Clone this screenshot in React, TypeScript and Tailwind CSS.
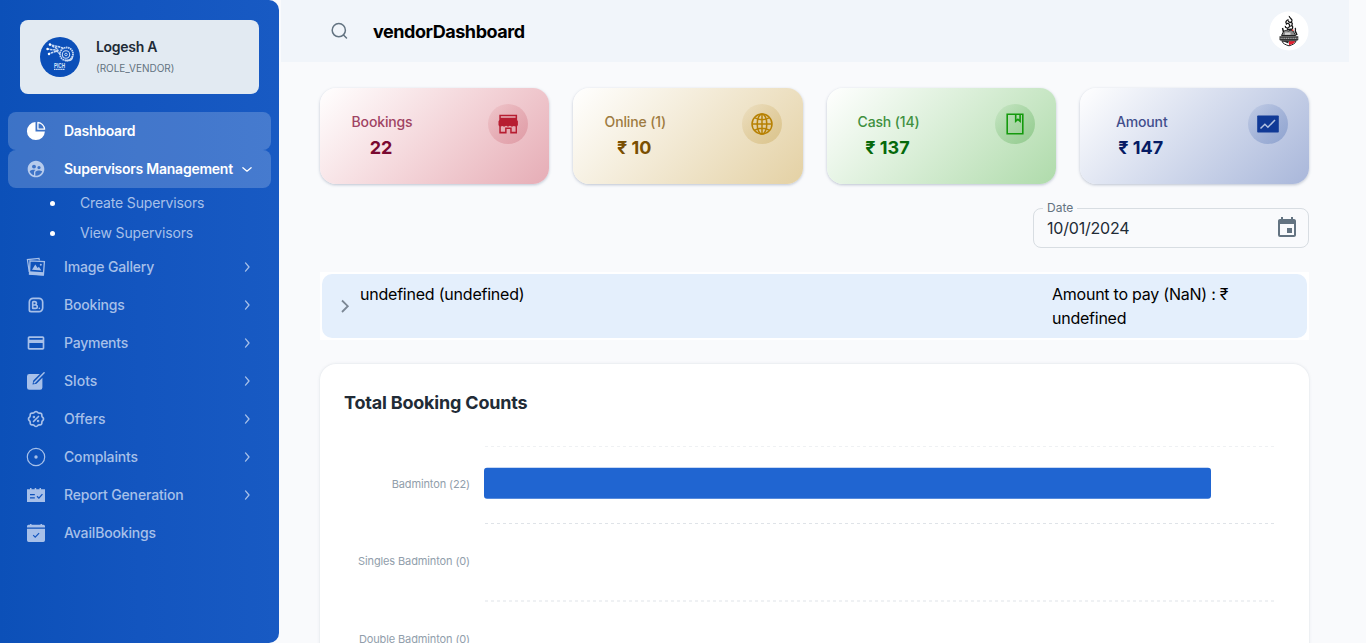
import type { ReactNode } from "react";
import { MdEvent, MdPayment, MdSupervisedUserCircle } from "react-icons/md";
import { TbBrandBooking, TbRosetteDiscount } from "react-icons/tb";

const PieIcon = () => (
  <svg width="20" height="20" viewBox="0 0 20 20" fill="none">
    <path fill="currentColor" d="M9.500 1.100v9.400h9.400A9 9 0 1 1 9.500 1.100Z" />
    <path stroke="currentColor" strokeWidth="1.300" strokeLinejoin="round" d="M11.900 1.500v6.700h6.700a7.300 7.300 0 0 0-6.700-6.700Z" />
  </svg>
);
const GalleryIcon = () => (
  <svg width="20" height="20" viewBox="0 0 20 20" fill="none" stroke="currentColor">
    <path strokeWidth="1.200" d="M3.200 15 1.400 2.600 13 1.300l.4 2" />
    <path strokeWidth="1.300" d="m4 3.800 14.400.9-1 13.400-13.900-1Z" />
    <path fill="currentColor" stroke="none" d="m3.300 14.300 14.400 1-.3 3.200-14-1ZM6 12.800l3.300-5.400 2.300 3.600 1.300-1.300 2.500 3.700Z" />
    <circle cx="14.800" cy="7.800" r="1" fill="currentColor" stroke="none" />
  </svg>
);
const EditIcon = () => (
  <svg width="20" height="20" viewBox="0 0 20 20" fill="none">
    <path fill="currentColor" d="M3.300 3h10.500L7.300 9.600l-.8 4 4-.8 5.900-6v9.700a2.300 2.300 0 0 1-2.300 2.300H3.300A2.300 2.300 0 0 1 1 16.500V5.300A2.300 2.300 0 0 1 3.300 3Z" />
    <path stroke="currentColor" strokeWidth="1.500" strokeLinecap="round" d="m8.300 11.700 9.800-9.900" />
  </svg>
);
const TargetIcon = () => (
  <svg width="20" height="20" viewBox="0 0 20 20" fill="none">
    <circle cx="10" cy="10" r="8.700" stroke="currentColor" strokeWidth="1.200" />
    <circle cx="10" cy="10" r="1.700" fill="currentColor" />
  </svg>
);
const ReportIcon = () => (
  <svg width="20" height="20" viewBox="0 0 20 20" fill="none">
    <path fill="currentColor" fillRule="evenodd" d="M1 4.200h3V3h1.500v1.200h3.200V3h1.500v1.200h3.300V3H15v1.200h4V17H1Zm3 4.900v1.200h4.800V9.100Zm0 3.200v1.200h4.800v-1.200Z" />
    <path d="m11 11.200 1.900 1.900 3.500-4" stroke="#1355bf" strokeWidth="1.300" />
  </svg>
);
const CalendarCheckIcon = () => (
  <svg width="20" height="20" viewBox="0 0 20 20" fill="none">
    <path fill="currentColor" d="M2.500 1.800H4V1h1.500v.8h9V1H16v.8h1.500A1.500 1.500 0 0 1 19 3.300v1.200H1V3.300a1.500 1.500 0 0 1 1.500-1.500ZM1 5.800h18v11.500a1.700 1.700 0 0 1-1.700 1.700H2.700A1.700 1.700 0 0 1 1 17.300Z" />
    <path d="m7.200 12.200 2 2 3.900-4" stroke="#1355bf" strokeWidth="1.200" />
  </svg>
);
const Chevron = ({ down = false }: { down?: boolean }) => (
  <svg width="16" height="16" viewBox="0 0 16 16" fill="none" stroke="currentColor" strokeWidth="1.300" strokeLinecap="round" strokeLinejoin="round">
    <path d={down ? "m3.900 6.700 4.100 3.500 4.100-3.500" : "m6.500 3.900 3.500 4.100-3.500 4.100"} />
  </svg>
);

const VendorLogo = () => (
  <svg width="40" height="40" viewBox="0 0 40 40" fill="none" stroke="#c9dbf5">
    <circle cx="20" cy="20" r="20" fill="#0b4fb9" stroke="none" />
    <circle cx="26.500" cy="17" r="6.500" strokeWidth="1.800" strokeDasharray="1.500 .6" />
    <circle cx="26" cy="17.500" r="3.700" strokeWidth="1.100" />
    <circle cx="26" cy="17.500" r="1.300" strokeWidth=".9" />
    <path strokeWidth="1.500" strokeDasharray="2.500 .6" d="M9 7.500 20 10M7 12l12 1.500M8 17l9-3M18 9.500l6 2M16 13.500l4 3.500M12 9l6 3" />
    <path strokeWidth="1.500" d="M32.500 19c0 5-4 4.800-7 4.500" />
    <circle cx="10" cy="7.500" r="1.200" fill="#fff" stroke="none" />
    <circle cx="7.500" cy="12" r="1.200" fill="#fff" stroke="none" />
    <circle cx="9" cy="17" r="1.200" fill="#fff" stroke="none" />
    <text x="14" y="30.800" fontFamily="Liberation Sans, sans-serif" fontSize="7.500" fontWeight="700" fill="#dbe8fb" stroke="none" textLength="11" lengthAdjust="spacingAndGlyphs">PICH</text>
    <path strokeWidth="1.200" strokeDasharray="1.600 .5" d="M14 32.400h11" />
  </svg>
);

const AccountLogo = () => (
  <svg width="40" height="40" viewBox="0 0 40 40" fill="none">
    <circle cx="20" cy="20" r="19.500" fill="#fff" />
    <path stroke="#151515" strokeWidth="1.300" d="M20.300 5c-.5 2 3.500 2.500 2.600 5-.8 2-3.600 1.600-3.600-.5M19.500 8.500c-2.500 1-3.500 3-1.800 4.200M17 13.500c2-2.500 4.500 0 3.300 2.300-1 2-4.300 1.500-4-1M21 11.500c3.500-.5 2.500 3 .3 4M23 14.500c1.500 2 .5 4-1.500 4M18 18c1.500 1.500 3-.5 5 .5M26 17c1.500 1.500-.5 2.500.5 4.500" />
    <path fill="#8a8a8a" stroke="#222" strokeWidth="1" d="M14 21.500c1.500-3 4-2 5.500-1.500 2-1.300 5-.6 5.500 1.500l1.800 3H12.500Z" />
    <path fill="#d4d4d4" d="M16 21.500h5.500v2.300H16Z" />
    <path stroke="#111" strokeWidth="1.400" d="m13.500 17 1 4M26.500 20.500l1.500 3.500" />
    <path fill="#333" d="M10.500 25.200h18.800v3.800l-1.500.8H12l-1.500-.8Z" />
    <path stroke="#c8c8c8" strokeWidth="1.100" strokeDasharray="1.300 .5" d="M11.500 27.300h17" />
    <path stroke="#222" strokeWidth="1" fill="#fff" d="M13 30.200h14c-.5 2.300-4 3.800-7 4.600-3-.8-6.500-2.300-7-4.600Z" />
    <path fill="#e31d2d" d="M20 30.200h6.300c-.5 2-3.500 3.200-6.300 4Z" />
    <path fill="#222" d="M14 30.200h5.500v2.200Z" />
    <circle cx="23.700" cy="19.200" r=".9" fill="#d43131" />
  </svg>
);

const StoreIcon = () => (
  <svg width="24" height="24" viewBox="0 0 24 24" fill="none">
    <path fill="currentColor" fillRule="evenodd" d="M3.300 2.800h17.800v5.300l.8 1.200v3.800l-.9 1.300v7h-6.800v-4.400h-3.600v4.400H3.300v-7l-.8-1.300V9.300l.8-1.200Zm1.500 1.500v1.500h14.800V4.300Zm0 10.300v5.200h4.300v-4.400h6.600v4.400h3.900v-5.200l-1.800-.7-1.900.8-2-.9-1.900.9-1.900-.9-2 .9-1.700-.8Z" />
  </svg>
);
const GlobeIcon = () => (
  <svg width="24" height="24" viewBox="0 0 24 24" fill="none" stroke="currentColor" strokeWidth="1.500">
    <circle cx="12" cy="12" r="10" />
    <ellipse cx="12" cy="12" rx="4.800" ry="10" />
    <path d="M12 2v20M2 12h20M4.500 5.700c4.200 2.700 10.800 2.700 15 0M4.500 18.300c4.200-2.700 10.800-2.700 15 0" />
  </svg>
);
const BookIcon = () => (
  <svg width="24" height="24" viewBox="0 0 24 24" fill="none" stroke="currentColor" strokeWidth="1.600">
    <path d="M4.200 2.300h15.600v19.400H4.200ZM12.700 2.300v7l2.200-1.900 2.200 1.900v-7" />
  </svg>
);
const TrendIcon = () => (
  <svg width="24" height="24" viewBox="0 0 24 24" fill="none">
    <rect x="1.200" y="3.500" width="21.600" height="17" rx=".8" fill="currentColor" />
    <path stroke="#b4c2e0" strokeWidth="1.500" d="m4.500 16.500 4.400-4.300 3 3L19 8" />
  </svg>
);

type Item = { label: string; icon: ReactNode; arrow: boolean; cls: string };
const items: Item[] = [
  { label: "Image Gallery", icon: <GalleryIcon />, arrow: true, cls: "tracking-[-0.15px]" },
  { label: "Bookings", icon: <TbBrandBooking size={20} />, arrow: true, cls: "tracking-[-0.2px]" },
  { label: "Payments", icon: <MdPayment size={20} />, arrow: true, cls: "tracking-[-0.25px]" },
  { label: "Slots", icon: <EditIcon />, arrow: true, cls: "tracking-[0.05px]" },
  { label: "Offers", icon: <TbRosetteDiscount size={20} />, arrow: true, cls: "tracking-[0px]" },
  { label: "Complaints", icon: <TargetIcon />, arrow: true, cls: "tracking-[-0.15px]" },
  { label: "Report Generation", icon: <ReportIcon />, arrow: true, cls: "tracking-[-0.16px]" },
  { label: "AvailBookings", icon: <CalendarCheckIcon />, arrow: false, cls: "tracking-[-0.16px]" },
];

const cards = [
  { title: "Bookings", value: "22", icon: <StoreIcon />, bg: "to-[#e6adb6]", tc: "text-[#a04363]", vc: "text-[#7a0930]", ic: "to-[#e09da7] from-[#b71d31]/5 text-[#b71d31]" },
  { title: "Online (1)", value: "₹ 10", icon: <GlobeIcon />, bg: "to-[#e4d1a4]", tc: "text-[#9e7b40]", vc: "text-[#7a4f01]", ic: "to-[#dbc48c] from-[#b78103]/5 text-[#b78103]" },
  { title: "Cash (14)", value: "₹ 137", icon: <BookIcon />, bg: "to-[#afdbab]", tc: "text-[#40903f]", vc: "text-[#06690b]", ic: "to-[#93cb8f] from-[#149a0d]/5 text-[#149a0d]" },
  { title: "Amount", value: "₹ 147", icon: <TrendIcon />, bg: "to-[#a9b7da]", tc: "text-[#414e8c]", vc: "text-[#061b64]", ic: "to-[#90a4d0] from-[#103996]/5 text-[#103996]" },
];

export default function App() {
  return (
    <div className="flex h-[643px] w-full overflow-hidden bg-[#f9fafc] font-['Inter','Noto_Sans',sans-serif] text-[#212b36]">
      <aside className="flex w-[279px] shrink-0 flex-col rounded-r-[10px] bg-linear-to-r from-[#0c50b8] via-[#1355bf] to-[#185ac3] text-sm">
        <div className="mx-5 mt-5 flex h-[74px] items-center rounded-lg bg-[#e2eaf2] pl-5">
          <VendorLogo />
          <div className="ml-4">
            <div className="text-sm leading-[22px] font-semibold tracking-[-0.3px]">Logesh A</div>
            <div className="text-[10px] leading-5 tracking-[-0.02px] text-[#637381]">(ROLE_VENDOR)</div>
          </div>
        </div>
        <nav className="mt-[18px] flex flex-col px-2 font-medium text-[#a7c0e9]">
          <div className="flex h-[38px] items-center rounded-lg bg-white/20 pl-[18px] font-semibold text-white">
            <PieIcon />
            <span className="ml-[18px] tracking-[-0.3px]">Dashboard</span>
          </div>
          <div className="flex h-[38px] items-center rounded-lg bg-white/20 pl-[18px]">
            <MdSupervisedUserCircle size={20} className="text-[#b6cbed]" />
            <span className="ml-[18px] w-[175px] font-semibold tracking-[-0.25px] whitespace-nowrap text-white">Supervisors Management</span>
            <span className="text-white"><Chevron down /></span>
          </div>
          {["Create Supervisors", "View Supervisors"].map((s) => (
            <div key={s} className="flex h-[30px] items-center pl-[42px] font-normal">
              <span className="size-[5px] rounded-full bg-white" />
              <span className="ml-[25px] tracking-[-0.16px]">{s}</span>
            </div>
          ))}
          {items.map((it) => (
            <div key={it.label} className="flex h-[38px] items-center pr-4 pl-[18px]">
              {it.icon}
              <span className={`ml-[18px] grow ${it.cls}`}>{it.label}</span>
              {it.arrow && <Chevron />}
            </div>
          ))}
        </nav>
      </aside>
      <main className="flex grow flex-col">
        <header className="mr-[17px] ml-0.5 flex h-[62px] shrink-0 items-center bg-[#f1f5fa] pr-10 pl-[49px]">
          <svg width="20" height="20" viewBox="0 0 20 20" fill="none" stroke="#637381" strokeWidth="1.500" strokeLinecap="round">
            <circle cx="8.800" cy="9.200" r="6.600" />
            <path d="m13.500 14 3 3" />
          </svg>
          <h1 className="mt-0.5 ml-[23px] grow text-lg font-bold tracking-[-0.45px] text-black">vendorDashboard</h1>
          <AccountLogo />
        </header>
        <div className="mr-[57px] ml-[41px] flex flex-col">
          <div className="mt-[26px] grid grid-cols-4 gap-6">
            {cards.map((c) => (
              <section key={c.title} className={`flex h-24 justify-between rounded-2xl bg-linear-135 from-white pr-[21px] shadow-[0_1px_3px_rgba(100,115,145,0.4)] ${c.bg}`}>
                <div className="w-[124px] pt-[23px] text-center">
                  <div className={`text-sm leading-[22px] font-medium tracking-[-0.15px] ${c.tc}`}>{c.title}</div>
                  <div className={`pt-px pr-0.5 text-lg leading-7 font-bold ${c.vc}`}>{c.value}</div>
                </div>
                <div className={`mt-4 flex size-10 items-center justify-center rounded-full bg-linear-135 ${c.ic}`}>{c.icon}</div>
              </section>
            ))}
          </div>
          <div className="relative mt-6 flex h-10 w-[276px] items-center justify-between self-end rounded-lg border border-[#d8dde2] pr-[9px] pl-[13px]">
            <span className="absolute -top-2.5 left-[9px] bg-[#f9fafc] px-1 text-xs leading-[18px] text-[#637381]">Date</span>
            <span className="text-base tracking-[-0.2px]">10/01/2024</span>
            <MdEvent size={24} className="text-[#637381]" />
          </div>
          <div className="mt-6 bg-white p-0.5 text-base text-black">
            <div className="flex h-16 rounded-[10px] bg-[#e4effc] pt-2 pl-[15px]">
              <svg className="mt-4" width="16" height="16" viewBox="0 0 16 16" fill="none" stroke="#7b8794" strokeWidth="1.800">
                <path d="m5 2.500 5.800 5.700L5 14" />
              </svg>
              <div className="ml-[7px] w-[692px] tracking-[-0.22px]">undefined (undefined)</div>
              <div className="w-[200px] tracking-[-0.24px]">Amount to pay (NaN) : ₹ undefined</div>
            </div>
          </div>
          <section className="mt-6 h-[400px] rounded-2xl bg-white px-6 pt-6 shadow-[0_0_3px_rgba(145,158,171,0.3)]">
            <h2 className="text-lg leading-[30px] font-bold tracking-[-0.2px]">Total Booking Counts</h2>
            <div className="mt-7 flex">
              <div className="-mt-px flex w-[126px] flex-col text-right text-[11px] text-[#919eab]">
                {["Badminton (22)", "Singles Badminton (0)", "Double Badminton (0)"].map((l) => (
                  <div key={l} className="flex h-[77.500px] items-center justify-end tracking-[-0.12px]">{l}</div>
                ))}
              </div>
              <svg className="ml-[14px]" width="792" height="240" viewBox="0 0 792 240" fill="none">
                <g stroke="#dfe3e8" strokeDasharray="3">
                  <path d="M1 0h790" />
                  <path d="M1 77.500h790" />
                  <path d="M1 155h790" />
                </g>
                <rect x="0" y="21.800" width="727" height="31" rx="3" fill="#2065d1" />
              </svg>
            </div>
          </section>
        </div>
      </main>
    </div>
  );
}
